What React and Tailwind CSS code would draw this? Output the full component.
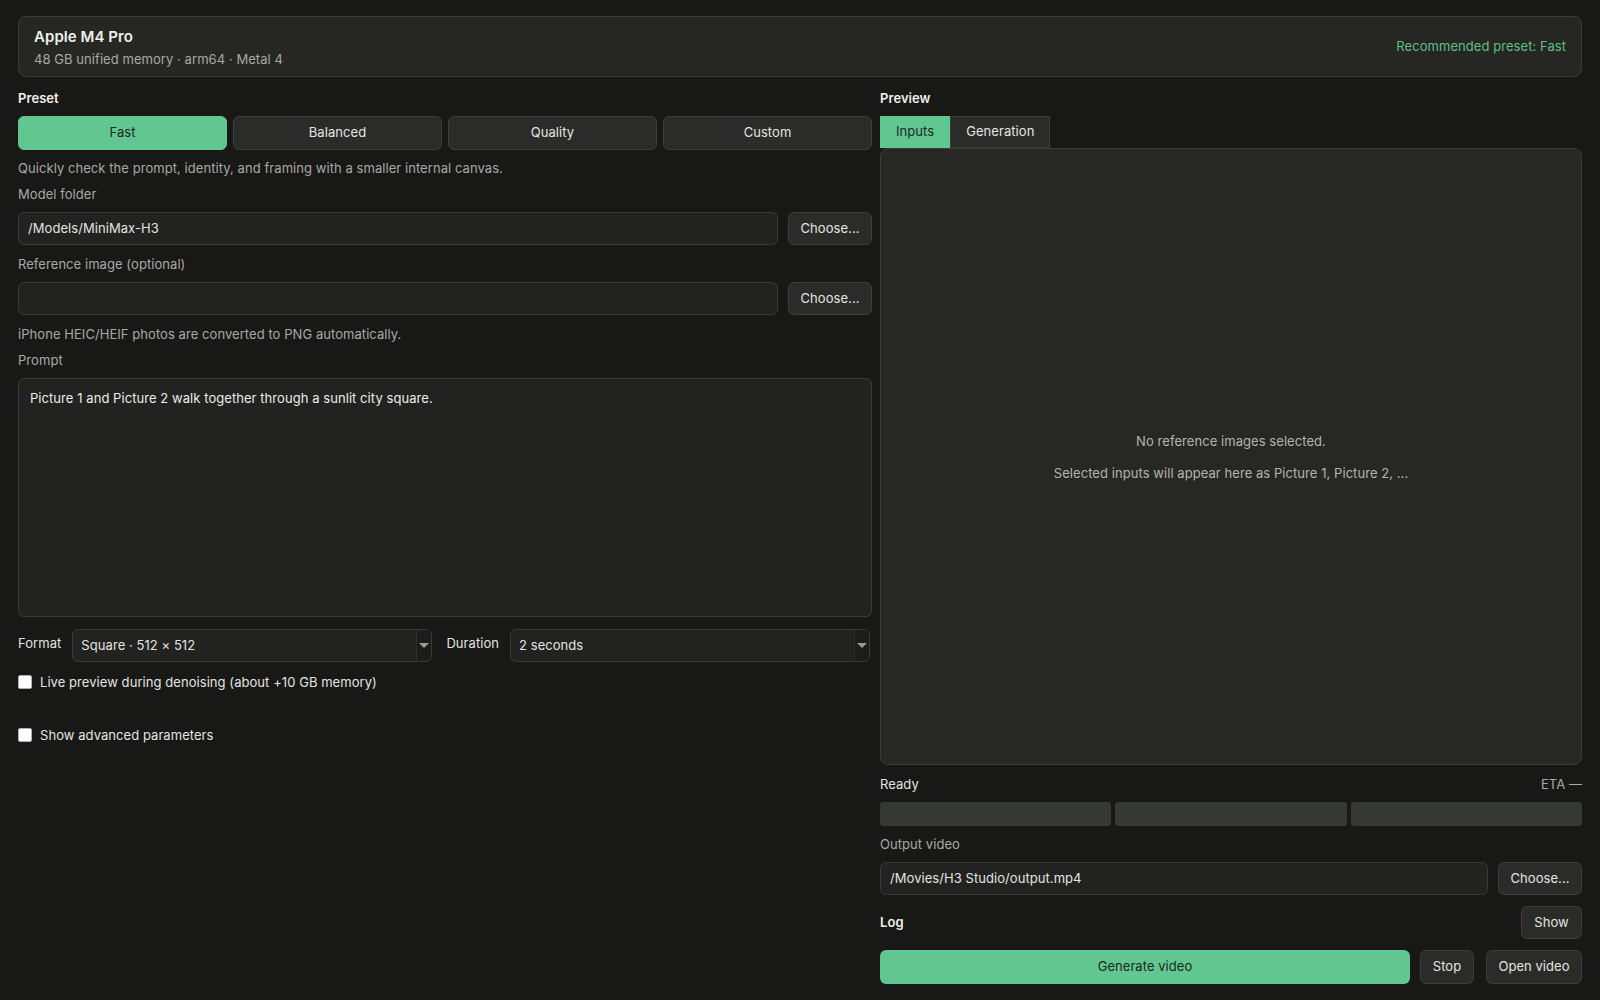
import React, { useState } from 'react';

const presets = ['Fast', 'Balanced', 'Quality', 'Custom'];

function Select({ value }) {
  return (
    <div className="flex-1 flex items-stretch h-[33px] bg-[#222221] border border-[#3a3b37] rounded-md overflow-hidden">
      <div className="flex-1 flex items-center px-2 text-[13px] text-[#e4e4e0]">{value}</div>
      <div className="w-[15px] flex items-center justify-center bg-[#1c1c1b] border-l border-[#2e2f2c]">
        <div className="w-0 h-0 border-l-[5px] border-r-[5px] border-t-[5px] border-l-transparent border-r-transparent border-t-[#9a9a96]" />
      </div>
    </div>
  );
}

function PathRow({ value }) {
  return (
    <div className="flex gap-[10px] mt-[10px]">
      <div className="flex-1 h-[33px] flex items-center px-[9px] bg-[#222221] border border-[#3a3b37] rounded-md text-[13px] text-[#e4e4e0]">
        {value}
      </div>
      <button className="w-[84px] h-[33px] bg-[#2b2c29] border border-[#3d3e3a] rounded-md text-[13px] text-[#e4e4e0]">
        Choose...
      </button>
    </div>
  );
}

export default function App() {
  const [preset, setPreset] = useState('Fast');
  const [tab, setTab] = useState('Inputs');

  return (
    <div className="h-screen w-full bg-[#181816] text-[#e4e4e0] px-[18px] pt-4 overflow-hidden select-none tracking-[0.06px]" style={{ fontFamily: 'Inter, "Noto Sans", sans-serif' }}>
      {/* hardware card */}
      <div className="h-[61px] flex items-center justify-between px-[15px] bg-[#262723] border border-[#3b3c38] rounded-lg">
        <div className="flex flex-col gap-[5px] pt-[2px]">
          <div className="text-[15px] font-semibold leading-[18px] text-[#f0f0ec]">Apple M4 Pro</div>
          <div className="text-[13px] leading-4 text-[#a9a9a4]">48 GB unified memory · arm64 · Metal 4</div>
        </div>
        <div className="text-[13px] text-[#5fbf88]">Recommended preset: Fast</div>
      </div>

      <div className="grid grid-cols-[854px_702px] gap-2 mt-[13px]">
        {/* left column */}
        <div className="flex flex-col">
          <div className="text-[13px] leading-4 font-semibold text-[#f0f0ec]">Preset</div>
          <div className="grid grid-cols-4 gap-[6px] mt-[10px]">
            {presets.map(p => (
              <button
                key={p}
                onClick={() => setPreset(p)}
                className={`h-[34px] rounded-md text-[13px] border ${preset === p ? 'bg-[#62c690] border-[#62c690] text-[#1b2a21]' : 'bg-[#2b2c29] border-[#3d3e3a] text-[#e4e4e0]'}`}
              >
                {p}
              </button>
            ))}
          </div>
          <div className="text-[13px] leading-4 text-[#a9a9a4] mt-[10px]">Quickly check the prompt, identity, and framing with a smaller internal canvas.</div>
          <div className="text-[13px] leading-4 text-[#a9a9a4] mt-[10px]">Model folder</div>
          <PathRow value="/Models/MiniMax-H3" />
          <div className="text-[13px] leading-4 text-[#a9a9a4] mt-[11px]">Reference image (optional)</div>
          <PathRow value="" />
          <div className="text-[13px] leading-4 text-[#a9a9a4] mt-[11px]">iPhone HEIC/HEIF photos are converted to PNG automatically.</div>
          <div className="text-[13px] leading-4 text-[#a9a9a4] mt-[10px]">Prompt</div>
          <div className="h-[239px] mt-[10px] bg-[#222221] border border-[#3a3b37] rounded-md px-[11px] pt-[11px] text-[13px] leading-4 text-[#ecece8]">
            Picture 1 and Picture 2 walk together through a sunlit city square.
          </div>
          <div className="flex items-start mt-[12px] pr-[2px]">
            <div className="text-[13px] leading-4 mt-[6px] mr-[11px] text-[#e4e4e0]">Format</div>
            <Select value="Square · 512 × 512" />
            <div className="text-[13px] leading-4 mt-[6px] ml-[14px] mr-[11px] text-[#e4e4e0]">Duration</div>
            <Select value="2 seconds" />
          </div>
          <label className="flex items-center gap-2 mt-[12px] text-[13px] leading-4 text-[#e4e4e0]">
            <span className="w-[14px] h-[14px] bg-white rounded-[2px] border border-[#b0b0ac]" />
            Live preview during denoising (about +10 GB memory)
          </label>
          <label className="flex items-center gap-2 mt-[37px] text-[13px] leading-4 text-[#e4e4e0]">
            <span className="w-[14px] h-[14px] bg-white rounded-[2px] border border-[#b0b0ac]" />
            Show advanced parameters
          </label>
        </div>

        {/* right column */}
        <div className="flex flex-col">
          <div className="text-[13px] leading-4 font-semibold text-[#f0f0ec]">Preview</div>
          <div className="flex mt-[10px]">
            {['Inputs', 'Generation'].map(t => (
              <button
                key={t}
                onClick={() => setTab(t)}
                className={`h-[32px] px-[15px] text-[13px] border ${tab === t ? 'bg-[#62c690] border-[#62c690] text-[#1b2a21]' : 'bg-[#2b2c29] border-[#3d3e3a] text-[#e4e4e0]'}`}
              >
                {t}
              </button>
            ))}
          </div>
          <div className="h-[617px] bg-[#272824] border border-[#3b3c38] rounded-lg flex flex-col items-center justify-center gap-[16px] text-[13px] leading-4 text-[#b4b4af]">
            <div>No reference images selected.</div>
            <div>Selected inputs will appear here as Picture 1, Picture 2, ...</div>
          </div>
          <div className="flex justify-between mt-[11px] text-[13px] leading-4">
            <span className="text-[#e4e4e0]">Ready</span>
            <span className="text-[#a9a9a4]">ETA —</span>
          </div>
          <div className="grid grid-cols-3 gap-[4px] mt-[10px]">
            <div className="h-[24px] bg-[#363834] rounded-[3px]" />
            <div className="h-[24px] bg-[#363834] rounded-[3px]" />
            <div className="h-[24px] bg-[#363834] rounded-[3px]" />
          </div>
          <div className="text-[13px] leading-4 text-[#a9a9a4] mt-[10px]">Output video</div>
          <PathRow value="/Movies/H3 Studio/output.mp4" />
          <div className="flex items-center justify-between mt-[11px]">
            <span className="text-[13px] font-semibold text-[#f0f0ec]">Log</span>
            <button className="h-[33px] w-[61px] bg-[#2b2c29] border border-[#3d3e3a] rounded-md text-[13px] text-[#e4e4e0]">Show</button>
          </div>
          <div className="flex mt-[11px]">
            <button className="flex-1 h-[34px] bg-[#62c690] rounded-md text-[13px] text-[#1b2a21]">Generate video</button>
            <button className="ml-[10px] w-[54px] h-[34px] bg-[#2b2c29] border border-[#3d3e3a] rounded-md text-[13px] text-[#e4e4e0]">Stop</button>
            <button className="ml-[12px] w-[96px] h-[34px] bg-[#2b2c29] border border-[#3d3e3a] rounded-md text-[13px] text-[#e4e4e0]">Open video</button>
          </div>
        </div>
      </div>
    </div>
  );
}
